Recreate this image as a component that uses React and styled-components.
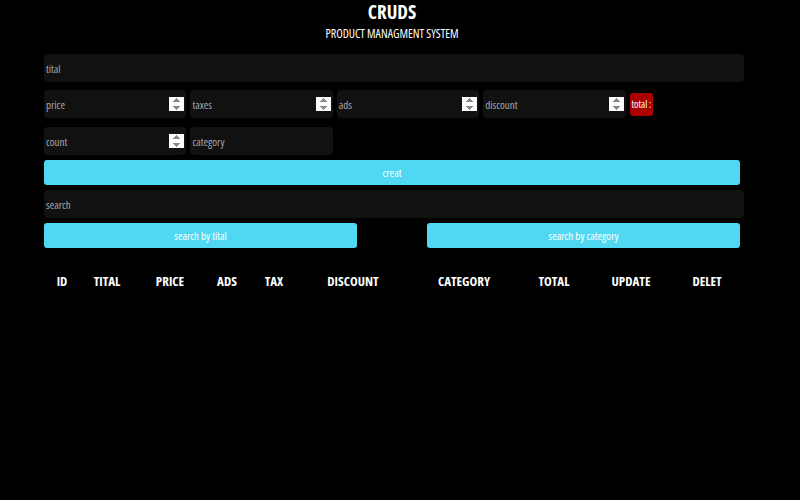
import React from 'react'
import styled, { createGlobalStyle } from 'styled-components'

const GlobalStyle = createGlobalStyle`
body {
  margin: 0;
  background: #000;
  color: #fff;
  font-family: "Open Sans", "DejaVu Sans", sans-serif;
  font-stretch: 75%;
}
`;

const Page = styled.div`
width: 700px;
margin-left: 44px;
`;

const Head = styled.div`
text-align: center;
margin-left: -4px;
padding-top: 2px;
`;
const Title = styled.h2`
margin: 0;
font-size: 19px;
font-weight: bold;
line-height: 20px;
`;
const Sub = styled.p`
margin: 5px 0 0;
font-size: 12px;
line-height: 14px;
`;

const Inputs = styled.div`
margin-top: 13px;
`;
const Field = styled.input`
width: ${p => p.$w || '100%'};
height: 28px;
box-sizing: border-box;
border: none;
outline: none;
border-radius: 4px;
background: #111;
color: #fff;
padding: 0 2px;
font-family: inherit;
font-stretch: 75%;
font-size: 11px;
margin: ${p => p.$m || '0'};
&::placeholder { color: #a8a8a8; }
&::-webkit-inner-spin-button { opacity: 1; }
`;
const Row = styled.div`
display: flex;
gap: 4px;
align-items: center;
margin-top: ${p => p.$mt || '8px'};
`;
const Total = styled.small`
background: #a00;
border-radius: 3px;
padding: 4px 2px;
font-size: 10px;
line-height: 15px;
`;
const Button = styled.button`
display: block;
width: ${p => p.$w || '696px'};
height: 25px;
border: none;
border-radius: 3px;
background: #50d8f2;
color: #fff;
font-family: inherit;
font-stretch: 75%;
font-size: 11px;
cursor: pointer;
margin-top: ${p => p.$mt || '0'};
`;
const SearchRow = styled.div`
display: flex;
justify-content: space-between;
width: 696px;
margin-top: 5px;
`;

const Table = styled.table`
width: 694px;
margin-top: 24px;
border-collapse: collapse;
table-layout: fixed;
`;
const Th = styled.th`
font-size: 13px;
font-weight: bold;
padding: 0;
height: 14px;
text-transform: uppercase;
`;

const cols = [
  ['id', 36], ['tital', 54], ['price', 72], ['ads', 42], ['tax', 52],
  ['discount', 106], ['category', 116], ['total', 64], ['update', 90], ['delet', 62],
];

export default function App() {
  return (
    <>
      <GlobalStyle />
      <Page>
        <Head>
          <Title>CRUDS</Title>
          <Sub>PRODUCT MANAGMENT SYSTEM</Sub>
        </Head>
        <Inputs>
          <Field placeholder="tital" />
          <Row>
            <Field type="number" placeholder="price" $w="142.4px" />
            <Field type="number" placeholder="taxes" $w="142.4px" />
            <Field type="number" placeholder="ads" $w="142.4px" />
            <Field type="number" placeholder="discount" $w="142.4px" />
            <Total>total :</Total>
          </Row>
          <Row $mt="9px">
            <Field type="number" placeholder="count" $w="142.4px" />
            <Field placeholder="category" $w="142.4px" />
          </Row>
          <Button $mt="5px">creat</Button>
          <Field placeholder="search" $m="5px 0 0" />
          <SearchRow>
            <Button $w="313px">search by tital</Button>
            <Button $w="313px">search by category</Button>
          </SearchRow>
        </Inputs>
        <Table>
          <colgroup>
            {cols.map(([c, w]) => <col key={c} width={w} />)}
          </colgroup>
          <thead>
            <tr>
              {cols.map(([c]) => <Th key={c}>{c}</Th>)}
            </tr>
          </thead>
        </Table>
      </Page>
    </>
  )
}
